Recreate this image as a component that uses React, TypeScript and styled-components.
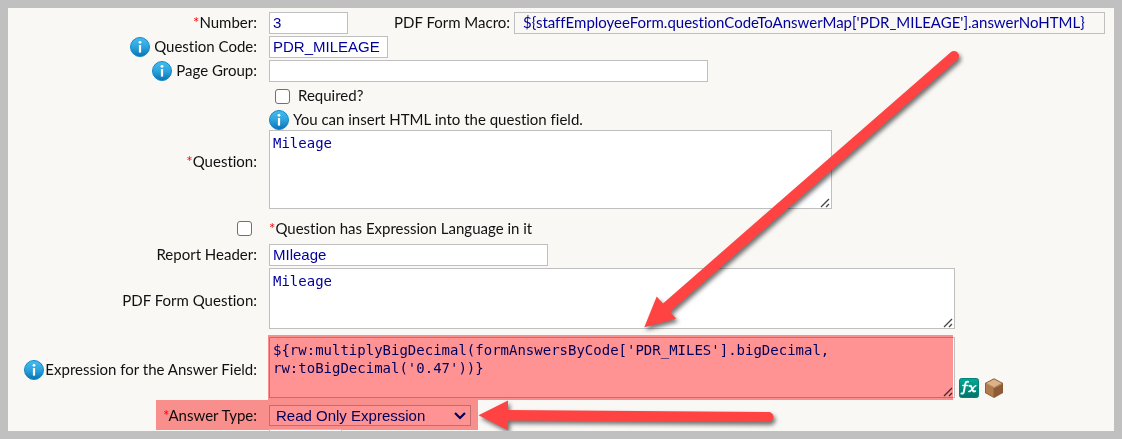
import React from "react";
import styled, { createGlobalStyle } from "styled-components";

const GlobalStyle = createGlobalStyle`
  *, *::before, *::after { box-sizing: border-box; }
  body { margin: 0; background: #c0c0c0; }
`;

const labelFont = `Lato, "Liberation Sans", sans-serif`;
const inputFont = `"Liberation Sans", Arial, sans-serif`;
const codeFont = `"DejaVu Sans Mono", "Liberation Mono", monospace`;

const Frame = styled.main`
  position: relative;
  height: 100vh;
  border: 8px solid #c0c0c0;
  background: #f9f8f5;
  overflow: hidden;
  font: 15px/18px ${labelFont};
  font-variant-ligatures: none;
  color: #111;

  label {
    padding-bottom: 2px;
  }
`;

const Form = styled.form`
  display: flex;
  flex-direction: column;
  gap: 2px;
  padding-top: 4px;
`;

const Row = styled.div<{ $height?: number; $top?: number }>`
  position: relative;
  display: grid;
  grid-template-columns: 249px minmax(0, 1fr);
  column-gap: 12px;
  align-items: center;
  min-height: ${(p) => p.$height ?? 22}px;
  padding-top: ${(p) => p.$top ?? 0}px;
`;

const LabelCell = styled.div<{ $gap?: number }>`
  display: flex;
  align-items: center;
  justify-content: flex-end;
  gap: ${(p) => p.$gap ?? 4}px;
  white-space: nowrap;
`;

const Field = styled.div<{ $gap?: number }>`
  display: flex;
  align-items: center;
  gap: ${(p) => p.$gap ?? 0}px;
  white-space: nowrap;
`;

const Stack = styled.div`
  display: flex;
  flex-direction: column;
  padding-bottom: 4px;
`;

const Hint = styled.span`
  padding-bottom: 2px;
`;

const Star = styled.span`
  color: #f00;
`;

const TextInput = styled.input<{ $width: number }>`
  width: ${(p) => p.$width}px;
  height: 22px;
  padding: 0 3px 2px;
  border: 1px solid #bfbfbf;
  border-radius: 0;
  background: #fff;
  color: #00009c;
  font: 15px/18px ${inputFont};
  outline: 0;
`;

const AreaWrap = styled.div<{ $width: number }>`
  position: relative;
  display: flex;
  width: ${(p) => p.$width}px;
  max-width: 100%;
`;

const Area = styled.textarea<{ $height: number }>`
  flex: 1;
  min-width: 0;
  height: ${(p) => p.$height}px;
  padding: 3px;
  border: 1px solid #bfbfbf;
  border-radius: 0;
  background: #fff;
  color: #00009c;
  font: 14px/18px ${codeFont};
  resize: none;
  overflow: hidden;
  outline: 0;
`;

const GripSvg = styled.svg`
  position: absolute;
  right: 2px;
  bottom: 1px;
`;

const MacroLabel = styled.label`
  margin-left: 46px;
  margin-right: 4px;
`;

const MacroBox = styled.output`
  flex: 1;
  height: 22px;
  margin-right: 9px;
  padding: 0 8px;
  border: 1px solid #bfbfbf;
  color: #00009c;
`;

const Check = styled.input`
  appearance: none;
  width: 15px;
  height: 15px;
  margin: 0;
  border: 1px solid #707070;
  border-radius: 3px;
  background: #fff;
`;

const CheckOffset = styled.span<{ $left?: number; $right?: number }>`
  display: flex;
  padding-left: ${(p) => p.$left ?? 0}px;
  padding-right: ${(p) => p.$right ?? 0}px;
`;

const SelectWrap = styled.div`
  position: relative;
  display: flex;
  width: 202px;
`;

const Select = styled.select`
  appearance: none;
  width: 100%;
  height: 21px;
  padding: 0 6px;
  border: 1px solid #bfbfbf;
  border-radius: 0;
  background: #fff;
  color: #00009c;
  font: 15px/19px ${inputFont};
`;

const ChevronSvg = styled.svg`
  position: absolute;
  right: 5px;
  top: 7px;
  pointer-events: none;
`;

const Highlight = styled.div`
  position: absolute;
  background: #ff9393;
  mix-blend-mode: multiply;
  pointer-events: none;
`;

const AreaHighlight = styled(Highlight)`
  inset: -2px 2px -2px -1px;
`;

const RowHighlight = styled(Highlight)`
  top: -4px;
  left: 148px;
  width: 322px;
  height: 30px;
`;

const IconButton = styled.button`
  display: flex;
  padding: 0;
  border: 0;
  background: none;
`;

const Tools = styled.div`
  display: flex;
  align-self: flex-end;
  gap: 5px;
  padding: 0 0 4px 4px;
`;

const ArrowLayer = styled.svg`
  position: absolute;
  left: -8px;
  top: -8px;
  pointer-events: none;
  filter: drop-shadow(2px 3px 2px rgba(0, 0, 0, 0.55));
`;

function InfoIcon() {
  return (
    <svg width="20" height="20" viewBox="0 0 20 20" aria-hidden="true">
      <defs>
        <linearGradient id="info" x1="0" y1="0" x2="0" y2="1">
          <stop offset="0" stopColor="#45bdf0" />
          <stop offset="0.5" stopColor="#2da3dc" />
          <stop offset="1" stopColor="#0872b4" />
        </linearGradient>
      </defs>
      <circle cx="10" cy="10" r="9.5" fill="url(#info)" stroke="#1288c6" />
      <circle cx="10" cy="5.3" r="1.4" fill="#fff" />
      <rect x="8.9" y="8" width="2.2" height="7.6" fill="#fff" />
    </svg>
  );
}

function Grip() {
  return (
    <GripSvg width="10" height="10" viewBox="0 0 10 10" aria-hidden="true">
      <path d="M1 9L9 1M6 9L9 6" stroke="#444" strokeWidth="1.3" fill="none" />
    </GripSvg>
  );
}

function FxIcon() {
  return (
    <svg width="20" height="20" viewBox="0 0 20 20" aria-hidden="true">
      <defs>
        <linearGradient id="fx" x1="0" y1="0" x2="0" y2="1">
          <stop offset="0" stopColor="#00a896" />
          <stop offset="1" stopColor="#007568" />
        </linearGradient>
      </defs>
      <rect x="0.5" y="0.5" width="19" height="19" rx="2" fill="url(#fx)" stroke="#008476" />
      <g fill="none" stroke="#fff" strokeLinecap="round">
        <path d="M9.2 3.8C7.4 3.2 6.6 4.2 6.2 6.4L4.9 13.2C4.5 15.4 3.8 16 2.4 15.5" strokeWidth="1.9" />
        <path d="M3.8 7.6H8.4" strokeWidth="1.5" />
        <path d="M10.3 7.8C12.4 7.2 12.3 8.4 13 10.4C13.7 12.8 14.2 14 16.2 13.2" strokeWidth="1.9" />
        <path d="M16.8 7.7C14.8 7.4 12.8 13.7 9.8 13.5" strokeWidth="1.6" />
      </g>
    </svg>
  );
}

function BoxIcon() {
  return (
    <svg width="20" height="20" viewBox="0 0 20 20" aria-hidden="true">
      <path d="M10 0.2L19 5V15L10 20L1 15V5Z" fill="#8b5a34" />
      <path d="M10 1.2L17.6 5.2L10 9.2L2.4 5.2Z" fill="#dcb28a" />
      <path d="M1.8 6L9.6 10.2V18.9L1.8 14.6Z" fill="#b27b4c" />
      <path d="M10.4 10.2L18.2 6V14.6L10.4 18.9Z" fill="#8d5c37" />
      <path d="M1.8 5.6L10 9.8L18.2 5.6" fill="none" stroke="#c9966a" strokeWidth="0.8" />
    </svg>
  );
}

export default function App() {
  return (
    <>
      <GlobalStyle />
      <Frame>
        <Form>
          <Row>
            <LabelCell>
              <label htmlFor="number"><Star>*</Star>Number:</label>
            </LabelCell>
            <Field>
              <TextInput id="number" $width={79} defaultValue="3" />
              <MacroLabel htmlFor="macro">PDF Form Macro:</MacroLabel>
              <MacroBox id="macro">
                {"${staffEmployeeForm.questionCodeToAnswerMap['PDR_MILEAGE'].answerNoHTML}"}
              </MacroBox>
            </Field>
          </Row>
          <Row>
            <LabelCell>
              <InfoIcon />
              <label htmlFor="code">Question Code:</label>
            </LabelCell>
            <Field><TextInput id="code" $width={119} defaultValue="PDR_MILEAGE" /></Field>
          </Row>
          <Row>
            <LabelCell>
              <InfoIcon />
              <label htmlFor="group">Page Group:</label>
            </LabelCell>
            <Field><TextInput id="group" $width={439} /></Field>
          </Row>
          <Row $height={24}>
            <span />
            <Field $gap={8}>
              <CheckOffset $left={6}><Check id="required" type="checkbox" /></CheckOffset>
              <label htmlFor="required">Required?</label>
            </Field>
          </Row>
          <Row>
            <LabelCell>
              <label htmlFor="question"><Star>*</Star>Question:</label>
            </LabelCell>
            <Stack>
              <Field $gap={4}>
                <InfoIcon />
                <Hint>You can insert HTML into the question field.</Hint>
              </Field>
              <AreaWrap $width={563}>
                <Area id="question" $height={79} defaultValue="Mileage" />
                <Grip />
              </AreaWrap>
            </Stack>
          </Row>
          <Row $height={27}>
            <LabelCell>
              <CheckOffset $right={5}><Check id="el" type="checkbox" /></CheckOffset>
            </LabelCell>
            <Field>
              <label htmlFor="el"><Star>*</Star>Question has Expression Language in it</label>
            </Field>
          </Row>
          <Row>
            <LabelCell><label htmlFor="header">Report Header:</label></LabelCell>
            <Field><TextInput id="header" $width={279} defaultValue="MIleage" /></Field>
          </Row>
          <Row>
            <LabelCell><label htmlFor="pdf">PDF Form Question:</label></LabelCell>
            <Stack>
              <AreaWrap $width={686}>
                <Area id="pdf" $height={61} defaultValue="Mileage" />
                <Grip />
              </AreaWrap>
            </Stack>
          </Row>
          <Row $top={2}>
            <LabelCell $gap={1}>
              <InfoIcon />
              <label htmlFor="expression">Expression for the Answer Field:</label>
            </LabelCell>
            <Field>
              <Stack>
                <AreaWrap $width={686}>
                  <Area
                    id="expression"
                    $height={61}
                    defaultValue={"${rw:multiplyBigDecimal(formAnswersByCode['PDR_MILES'].bigDecimal,\nrw:toBigDecimal('0.47'))}"}
                  />
                  <Grip />
                  <AreaHighlight />
                </AreaWrap>
              </Stack>
              <Tools>
                <IconButton type="button" aria-label="Functions"><FxIcon /></IconButton>
                <IconButton type="button" aria-label="Objects"><BoxIcon /></IconButton>
              </Tools>
            </Field>
          </Row>
          <Row $height={23}>
            <LabelCell>
              <label htmlFor="type"><Star>*</Star>Answer Type:</label>
            </LabelCell>
            <SelectWrap>
              <Select id="type" defaultValue="expr">
                <option value="expr">Read Only Expression</option>
              </Select>
              <ChevronSvg width="12" height="8" viewBox="0 0 12 8" aria-hidden="true">
                <path d="M1 1L6 6L11 1" fill="none" stroke="#00009c" strokeWidth="2.2" />
              </ChevronSvg>
            </SelectWrap>
            <RowHighlight />
          </Row>
          <Row>
            <span />
            <Field><TextInput aria-label="Order" $width={73} /></Field>
          </Row>
        </Form>
        <ArrowLayer width="1122" height="439" viewBox="0 0 1122 439" aria-hidden="true">
          <g fill="#ff4343">
            <path d="M644.3 327.3L656.7 296.5L663 303.4L950.7 52.2A5 5 0 0 1 957.3 59.8L670 311.7L676.2 318.8Z" />
            <path d="M478.5 415.3L508 400.6V410L768.5 412A5 5 0 0 1 768.5 422L508 420.6V430.2Z" />
          </g>
        </ArrowLayer>
      </Frame>
    </>
  );
}
